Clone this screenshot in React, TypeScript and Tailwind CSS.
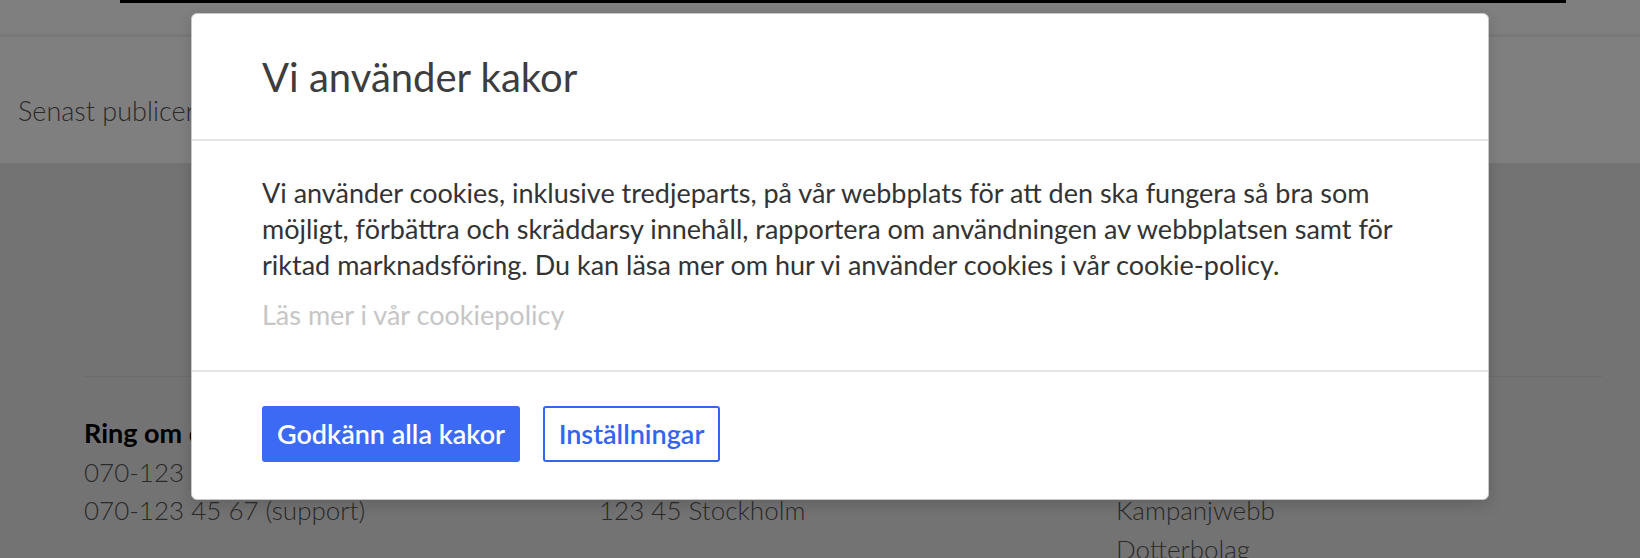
import React from "react";

const FONT = "font-['Lato','Liberation_Sans',sans-serif]";

function PageBehind() {
  return (
    <div className="h-[558px] w-[1640px] bg-[#e6e6e6]">
      <header className="h-[37px] border-b-[3px] border-[#f1f1f1] bg-white">
        <div className="ml-[120px] h-[3px] w-[1446px] bg-black" />
      </header>
      <section className="h-[126px] bg-white px-[18px] pt-[58px]">
        <p className="text-[27px] font-light leading-[1.2] text-[#555]">Senast publicerade</p>
      </section>
      <footer className="pl-[84px] pr-[38px] pt-[213px]">
        <div className="border-t border-[#dad9d0] pt-[37px]">
          <div className="grid grid-cols-[515px_517px_1fr] text-[26px] font-light leading-[38.5px] text-[#555]">
            <div>
              <p className="text-[27px] font-bold text-black">Ring om du har frågor</p>
              <p>070-123 45 67 (växel)</p>
              <p>070-123 45 67 (support)</p>
            </div>
            <div>
              <p className="text-[27px] font-bold text-black">Besöksadress</p>
              <p>Storgatan 1</p>
              <p>123 45 Stockholm</p>
            </div>
            <div>
              <p className="text-[27px] font-bold text-black">Våra webbplatser</p>
              <p>Huvudwebb</p>
              <p>Kampanjwebb</p>
              <p>Dotterbolag</p>
            </div>
          </div>
        </div>
      </footer>
    </div>
  );
}

function CookieDialog() {
  return (
    <div
      role="dialog"
      aria-labelledby="cookie-title"
      className="absolute left-[191px] top-[13px] w-[1298px] rounded-md border border-[#c8c8c8] bg-white shadow-[0_5px_15px_rgba(0,0,0,0.15)]"
    >
      <div className="flex h-[127px] items-center border-b-2 border-[#e5e5e5] px-[70px]">
        <h2 id="cookie-title" className="text-[40px] font-normal leading-[48px] text-[#3d3d3d]">
          Vi använder kakor
        </h2>
      </div>

      <div className="border-b-2 border-[#e5e5e5] px-[70px] pb-[37px] pt-[34px] text-[27px] leading-[36px]">
        <p className="text-[#333]">
          Vi använder cookies, inklusive tredjeparts, på vår webbplats för att den ska fungera så bra som
          <br />
          möjligt, förbättra och skräddarsy innehåll, rapportera om användningen av webbplatsen samt för
          <br />
          riktad marknadsföring. Du kan läsa mer om hur vi använder cookies i vår cookie-policy.
        </p>
        <a href="#" className="mt-[14px] block w-fit text-[#c6c6c6]">
          Läs mer i vår cookiepolicy
        </a>
      </div>

      <div className="flex items-center gap-[23px] px-[70px] pb-[37px] pt-[34px]">
        <button className="flex h-[56px] w-[258px] items-center justify-center rounded-[3px] bg-[#3c6af5] text-[27px] font-semibold text-white">
          Godkänn alla kakor
        </button>
        <button className="flex h-[56px] w-[177px] items-center justify-center rounded-[3px] border-2 border-[#3265f2] bg-white text-[27px] font-semibold text-[#3265f2]">
          Inställningar
        </button>
      </div>
    </div>
  );
}

export default function App() {
  return (
    <div className={`relative h-[558px] w-[1640px] overflow-hidden ${FONT}`}>
      <PageBehind />
      <div className="absolute inset-0 bg-black/50" />
      <CookieDialog />
    </div>
  );
}
